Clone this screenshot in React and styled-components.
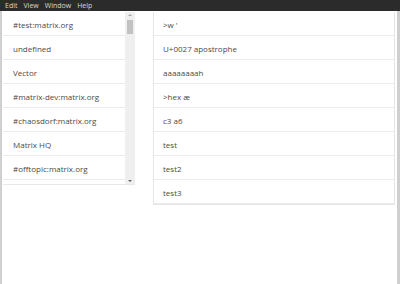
import styled, { createGlobalStyle } from "styled-components";

const Global = createGlobalStyle`
  html, body { margin: 0; padding: 0; background: #fff; }
  body { font-family: "Open Sans", "Noto Sans", sans-serif; }
`;

const Window = styled.div`
  width: 400px;
  height: 284px;
  display: flex;
  flex-direction: column;
  overflow: hidden;
`;

const MenuBar = styled.div`
  height: 11px;
  background: #2b2b2b;
  display: flex;
  align-items: center;
  gap: 6px;
  padding-left: 5px;
  font-size: 7px;
  color: #d8d8d8;
  flex-shrink: 0;
`;

const Body = styled.div`
  flex: 1;
  display: flex;
  border-left: 2px solid #d0d0d0;
  border-right: 3px solid #cfcfcf;
  box-shadow: inset -2px 0 0 #fff;
`;

const Content = styled.div`
  flex: 1;
  display: flex;
  align-items: flex-start;
  padding: 1px 0 0 1px;
  gap: 18px;
`;

const LeftPanel = styled.div`
  display: flex;
  width: 132px;
  height: 172px;
  border-bottom: 1px solid #e8e8e8;
`;

const List = styled.div`
  flex: 1;
  display: flex;
  flex-direction: column;
  overflow: hidden;
`;

const Row = styled.div`
  height: 24px;
  flex-shrink: 0;
  display: flex;
  align-items: center;
  padding-top: 1px;
  padding-left: ${(p) => p.$indent}px;
  font-size: 8px;
  color: #4a4a4a;
  border-bottom: 1px solid #ececec;
  box-sizing: border-box;
  white-space: nowrap;
`;

const Scrollbar = styled.div`
  width: 10px;
  background: #efefef;
  position: relative;
`;

const Thumb = styled.div`
  position: absolute;
  left: 2px;
  top: 8px;
  width: 6px;
  height: 14px;
  background: #c2c2c2;
`;

const Arrow = styled.div`
  position: absolute;
  left: 3px;
  width: 0;
  height: 0;
  border-left: 2px solid transparent;
  border-right: 2px solid transparent;
  ${(p) =>
    p.$down
      ? "bottom: 2px; border-top: 2px solid #666;"
      : "top: 2px; border-bottom: 2px solid #aaa;"}
`;

const RightPanel = styled.div`
  width: 240px;
  border: 1px solid #e6e6e6;
  border-top: none;
  display: flex;
  flex-direction: column;
`;

const rooms = [
  "#test:matrix.org",
  "undefined",
  "Vector",
  "#matrix-dev:matrix.org",
  "#chaosdorf:matrix.org",
  "Matrix HQ",
  "#offtopic:matrix.org",
];

const messages = [
  ">w '",
  "U+0027 apostrophe",
  "aaaaaaaah",
  ">hex æ",
  "c3 a6",
  "test",
  "test2",
  "test3",
];

export default function App() {
  return (
    <Window>
      <Global />
      <MenuBar>
        <span>Edit</span>
        <span>View</span>
        <span>Window</span>
        <span>Help</span>
      </MenuBar>
      <Body>
        <Content>
          <LeftPanel>
            <List>
              {rooms.map((r) => (
                <Row key={r} $indent={10}>{r}</Row>
              ))}
            </List>
            <Scrollbar>
              <Arrow />
              <Thumb />
              <Arrow $down />
            </Scrollbar>
          </LeftPanel>
          <RightPanel>
            {messages.map((m) => (
              <Row key={m} $indent={9}>{m}</Row>
            ))}
          </RightPanel>
        </Content>
      </Body>
    </Window>
  );
}
